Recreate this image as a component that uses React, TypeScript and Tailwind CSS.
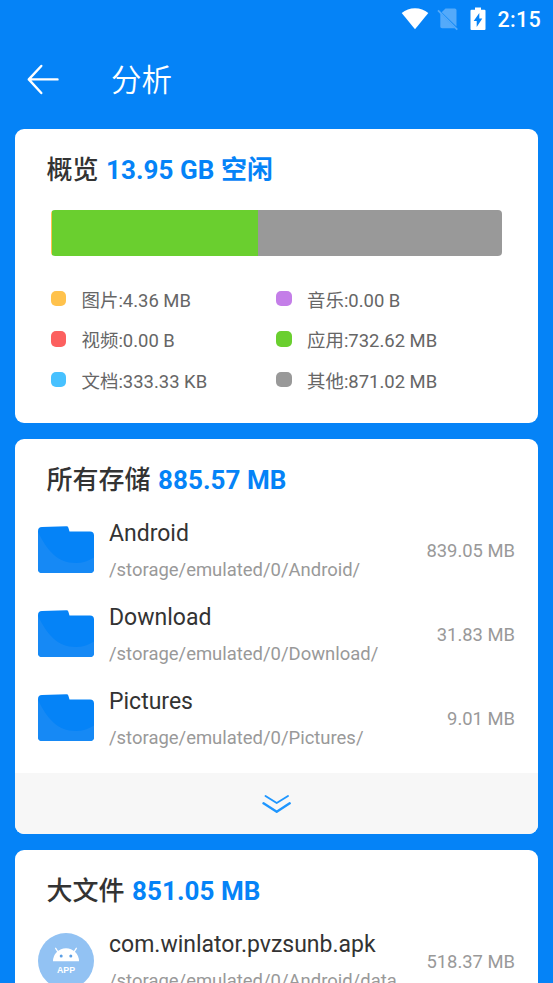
import type { ReactNode } from "react"

const BarData = [
    { id: 1, color: "bg-[#ffc24c]", width: 0.25 },
    { id: 2, color: "bg-[#6acf2f]", width: 45.6 },
    { id: 3, color: "bg-[#999999]", width: 54.15 },
]

const LegendData = [
    { id: 1, name: "图片", size: "4.36 MB", color: "bg-[#ffc24c]" },
    { id: 2, name: "音乐", size: "0.00 B", color: "bg-[#c47ee8]" },
    { id: 3, name: "视频", size: "0.00 B", color: "bg-[#fc605f]" },
    { id: 4, name: "应用", size: "732.62 MB", color: "bg-[#6acf2f]" },
    { id: 5, name: "文档", size: "333.33 KB", color: "bg-[#47c1ff]" },
    { id: 6, name: "其他", size: "871.02 MB", color: "bg-[#999999]" },
]

const FolderData = [
    { id: 1, name: "Android", path: "/storage/emulated/0/Android/", size: "839.05 MB" },
    { id: 2, name: "Download", path: "/storage/emulated/0/Download/", size: "31.83 MB" },
    { id: 3, name: "Pictures", path: "/storage/emulated/0/Pictures/", size: "9.01 MB" },
]



export default function App() {
  return (
    <main className="h-[983px] w-full overflow-hidden bg-[#0583f7] font-[Roboto,'Noto_Sans_CJK_SC',sans-serif] text-[#333333]">
        <StatusBar />
        <AppBar title="分析" />

        <div className="flex flex-col gap-4 pr-[15px] pl-[15px]">
            <Card css="h-[294px]">
                <CardTitle name="概览" value="13.95 GB 空闲" />
                <div className="mt-[14px] ml-9 flex h-[46px] w-[451px] overflow-hidden rounded-[4px]">
                    {BarData.map((i) => (
                        <div key={i.id} className={i.color} style={{ width: i.width + "%" }} />
                    ))}
                </div>
                <div className="mt-[22px] ml-[35.5px] grid grid-cols-[225.5px_1fr]">
                    {LegendData.map((i) => (
                        <div key={i.id} className="flex h-[40.5px] items-center">
                            <span className={`size-[15.5px] rounded-[5px] ${i.color}`} />
                            <span className="ml-[15.5px] pt-[5px] text-[18.45px] leading-6 text-[#666666]">
                                {i.name}:{i.size}
                            </span>
                        </div>
                    ))}
                </div>
            </Card>

            <Card css="h-[395px]">
                <CardTitle name="所有存储" value="885.57 MB" />
                <div>
                    {FolderData.map((i) => (
                        <FileRow key={i.id} icon={<FolderIcon />} name={i.name} path={i.path} size={i.size} />
                    ))}
                </div>
                <button className="mt-auto flex h-[61px] shrink-0 items-center justify-center bg-[#f7f7f7]">
                    <ExpandIcon />
                </button>
            </Card>

            <Card css="h-[300px]">
                <CardTitle name="大文件" value="851.05 MB" />
                <FileRow
                    icon={<ApkIcon />}
                    name="com.winlator.pvzsunb.apk"
                    path="/storage/emulated/0/Android/data"
                    size="518.37 MB"
                />
            </Card>
        </div>
    </main>
  )
}



function StatusBar() {
    return (
        <header className="flex h-[38px] items-center justify-end pr-[12px] text-white">
            <svg className="h-[22px] w-[28px]" viewBox="0 0 28 22" fill="currentColor">
                <path d="M0.7 4.9C4.4 2 9 0.3 14 0.3s9.600 1.700 13.300 4.600L14 21.300z" />
            </svg>
            <svg className="ml-[8px] h-[24px] w-[22px]" viewBox="0 0 22 24">
                <path d="M8.500 1.500h9.300a1.700 1.700 0 0 1 1.700 1.700v16.300L4.700 5.200z" fill="#54aafa" />
                <path d="M3.300 6.500L18 21.200H5a1.700 1.700 0 0 1-1.700-1.700z" fill="#54aafa" />
                <path d="M1 3.400L20.300 22.600" stroke="#54aafa" strokeWidth="1.700" />
            </svg>
            <svg className="ml-[11px] h-[24px] w-[16px]" viewBox="0 0 16 24">
                <path d="M5 0.600h6v2.200h3.500a1 1 0 0 1 1 1v18.300a1 1 0 0 1-1 1h-13a1 1 0 0 1-1-1V3.800a1 1 0 0 1 1-1H5z" fill="currentColor" />
                <path d="M9.300 6v5.400h3L6.700 20v-6H3.700z" fill="#0583f7" />
            </svg>
            <span className="ml-[11px] pt-[1px] text-[21.5px] leading-6 font-medium tracking-[0.3px]">2:15</span>
        </header>
    )
}



function AppBar({ title }: { title: string }) {
    return (
        <nav className="flex h-[91px] items-start pt-[20px] pl-[27px] text-white">
            <svg className="mt-[6px] h-[31px] w-[32px]" viewBox="0 0 32 31" fill="none" stroke="currentColor" strokeWidth="2.400" strokeLinecap="round" strokeLinejoin="round">
                <path d="M14.300 2L1.800 15.400L14.300 29M1.800 15.400H30.500" />
            </svg>
            <h1 className="mt-[2px] ml-[52px] text-[30.5px] leading-[42px] font-[350]">{title}</h1>
        </nav>
    )
}



interface pCard {
    children: ReactNode
    css?: string
}

function Card({ children, css }: pCard) {
    return (
        <section className={`flex shrink-0 flex-col overflow-hidden rounded-[9px] bg-white ${css}`}>
            {children}
        </section>
    )
}



function CardTitle({ name, value }: { name: string; value: string }) {
    return (
        <h2 className="mt-[23px] ml-[31.5px] h-[44px] text-[26px] leading-9 font-medium whitespace-pre">
            {name} <span className="ml-[1px] font-bold tracking-[0.05px] text-[#0583f7]">{value}</span>
        </h2>
    )
}



interface pFileRow {
    icon: ReactNode
    name: string
    path: string
    size: string
}

function FileRow({ icon, name, path, size }: pFileRow) {
    return (
        <div className="flex h-[84px] items-center pt-[3px] pr-[23px] pl-[23px]">
            {icon}
            <div className="ml-[15px] flex-1 pt-[1px]">
                <p className="text-[23px] leading-8">{name}</p>
                <p className="mt-[8px] text-[18.45px] leading-6 text-[#999999]">{path}</p>
            </div>
            <span className="pt-[2px] text-[18.4px] leading-6 text-[#999999]">{size}</span>
        </div>
    )
}



function FolderIcon() {
    return (
        <svg className="h-[56px] w-[56px]" viewBox="0 0 56 56">
            <path d="M4 5L28.500 4.300Q30 4.300 30.400 5.700L31.500 9.500H52a4 4 0 0 1 4 4V47a4 4 0 0 1-4 4H4a4 4 0 0 1-4-4V9a4 4 0 0 1 4-4z" fill="#0583f7" />
            <path d="M0 10C9 28 19 41 38 41Q47 41 56 35.500V47a4 4 0 0 1-4 4H4a4 4 0 0 1-4-4z" fill="#1689f5" />
        </svg>
    )
}



function ExpandIcon() {
    return (
        <svg className="h-[20px] w-[30px]" viewBox="0.5 0 30 20" fill="none" stroke="#1e96ff" strokeLinecap="round" strokeLinejoin="round">
            <path d="M4 2L15.200 9L26.500 2" strokeWidth="1.900" />
            <path d="M2 9.300L15.200 17.700L28.200 9.300" strokeWidth="2.400" />
        </svg>
    )
}



function ApkIcon() {
    return (
        <svg className="h-[56px] w-[56px]" viewBox="0 0 56 56">
            <circle cx="28" cy="28" r="28" fill="#92c2f3" />
            <path d="M15 28.300a13 13 0 0 1 26 0z" fill="#fff" />
            <path d="M17.700 15.300L20.300 19.500M38.300 15.300L35.700 19.500" stroke="#fff" strokeWidth="1.300" strokeLinecap="round" />
            <circle cx="23.200" cy="23" r="1.500" fill="#5b9fe6" />
            <circle cx="32.800" cy="23" r="1.500" fill="#5b9fe6" />
            <text x="28" y="40" textAnchor="middle" fill="#fff" fontSize="8.800" fontWeight="700" fontFamily="Liberation Sans, sans-serif">APP</text>
        </svg>
    )
}
